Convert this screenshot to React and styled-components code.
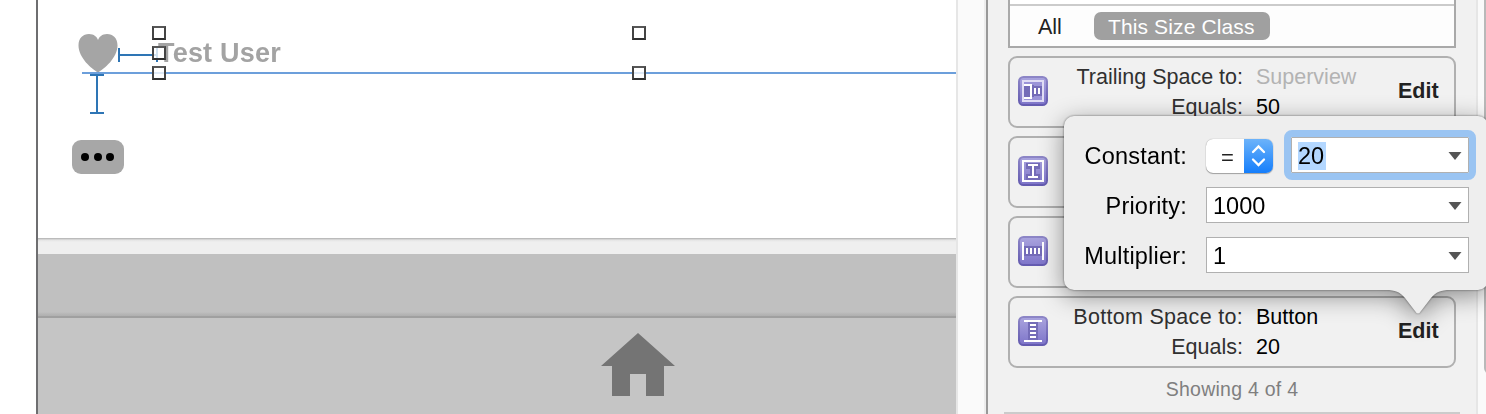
import React from "react";
import styled, { createGlobalStyle } from "styled-components";

const Global = createGlobalStyle`
  * { box-sizing: border-box; }
  body { margin: 0; overflow: hidden; background: #fff; font-family: "Liberation Sans", Arial, sans-serif; }
`;

const Window = styled.div`
  position: relative;
  display: flex;
  width: 1486px;
  height: 414px;
  overflow: hidden;
  background: #fff;
`;

/* Canvas */
const Canvas = styled.main`
  position: relative;
  display: flex;
  flex-direction: column;
  width: 920px;
  height: 414px;
  margin-left: 36px;
  border-left: 2px solid #6e6e70;
`;
const Scene = styled.div`
  height: 238px;
  background: #fff;
`;
const Gap = styled.div`
  height: 16px;
  background: linear-gradient(#b0b0b0 0, #c6c6c6 1px, #e4e4e4 2px, #efefef 4px);
`;
const ToolbarBlank = styled.div`
  height: 62px;
  background: linear-gradient(#c0c0c0 0, #c0c0c0 58px, #b6b6b6 60px, #b0b0b0 62px);
`;
const TabBar = styled.div`
  flex: 1;
  display: flex;
  justify-content: flex-start;
  padding: 15px 0 0 563px;
  background: #c5c5c5;
  border-top: 2px solid #a0a0a0;
`;
const HomeIcon = styled.svg`
  width: 74px;
  height: 66px;
  filter: blur(0.4px);
`;
const Placed = styled.div`
  position: absolute;
  left: ${(p) => p.$x - 38}px;
  top: ${(p) => p.$y}px;
  line-height: 0;
`;
const Handle = styled(Placed)`
  width: 14px;
  height: 14px;
  border: 2px solid;
  border-color: #575757 #444 #303030 #444;
  background: rgba(255, 255, 255, 0.78);
`;
const Guide = styled(Placed)`
  width: 874px;
  height: 2px;
  background: #6c9fdb;
`;
const UserLabel = styled(Placed)`
  color: #a3a3a3;
  font-size: 27px;
  font-weight: 700;
  line-height: 30px;
  letter-spacing: 0.2px;
  white-space: nowrap;
  filter: blur(0.45px);
`;
const MoreButton = styled(Placed)`
  display: flex;
  align-items: center;
  justify-content: center;
  gap: 4.7px;
  width: 52px;
  height: 34px;
  padding: 0 1px 1px 0;
  border-radius: 9px;
  background: #a7a7a7;
`;
const Dot = styled.span`
  width: 8px;
  height: 8px;
  border-radius: 50%;
  background: #000;
  filter: blur(0.4px);
`;

/* Gutter */
const Gutter = styled.div`
  width: 32px;
  border-left: 2px solid #e6e6e6;
  border-right: 2px solid #999;
  background: linear-gradient(90deg, #fafafa 26px, #ededed 26px);
`;

/* Inspector */
const Inspector = styled.aside`
  display: flex;
  flex-direction: column;
  width: 488px;
  padding: 0 20px;
  background: #f1f1f1;
`;
const SizePanel = styled.div`
  height: 48px;
  flex: none;
  padding-top: 4px;
  border: 2px solid #a9a9a9;
  border-top: 0;
  background: #fff;
`;
const Scope = styled.div`
  display: flex;
  height: 42px;
  padding: 6px 0 0 28px;
  border-top: 2px solid #cbcbcb;
  background: #fdfdfd;
  color: #222;
  font-size: 21.5px;
  line-height: 30px;
`;
const ScopeAll = styled.span`
  width: 56px;
`;
const ScopeCurrent = styled.span`
  width: 176px;
  height: 28px;
  padding-left: 14px;
  border-radius: 7px;
  background: #a0a0a0;
  color: #fff;
  font-size: 21px;
  letter-spacing: 0.12px;
  white-space: nowrap;
`;
const Constraints = styled.div`
  display: flex;
  flex-direction: column;
  gap: 8px;
  padding-top: 8px;
`;
const Card = styled.div`
  display: flex;
  height: 72px;
  border: 2px solid #b0b0b0;
  border-radius: 9px;
  background: #f1f1f1;
`;
const KindIcon = styled.svg`
  flex: none;
  width: 30px;
  height: 30px;
  margin: 18px 0 0 8px;
`;
const Facts = styled.div`
  display: grid;
  grid-template-columns: 195px 1fr;
  grid-template-rows: 30px 30px;
  column-gap: 13px;
  width: 342px;
  padding-top: 4px;
  font-size: 21.5px;
  line-height: 30px;
  white-space: nowrap;
`;
const FactName = styled.span`
  color: #303030;
  letter-spacing: ${(p) => p.$track || 0}px;
  text-align: right;
`;
const FactValue = styled.span`
  color: ${(p) => (p.$dim ? "#b3b3b3" : "#000")};
`;
const Edit = styled.span`
  margin: 19px 0 0 8px;
  color: #222;
  font-size: 21.5px;
  font-weight: 700;
  line-height: 28px;
`;
const Summary = styled.div`
  padding-top: 7px;
  color: #7f7f7f;
  font-size: 19.5px;
  line-height: 28px;
  letter-spacing: 0.25px;
  text-align: center;
`;
const Rule = styled.div`
  height: 4px;
  margin: 9px -4px 0;
  background: #cbcbcb;
`;
const ScrollTrack = styled.div`
  width: 10px;
  padding-left: 6px;
  border-left: 2px solid #e6e6e6;
  background: #fafafa;
`;
const Thumb = styled.div`
  width: 8px;
  height: 374px;
  border-radius: 0 0 0 6px;
  background: #b9b9b9;
`;

/* Popover */
const Popover = styled.div`
  position: absolute;
  left: 1064px;
  top: 116px;
  width: 424px;
  height: 174px;
  filter: drop-shadow(0 0 1px rgba(0, 0, 0, 0.5)) drop-shadow(0 6px 12px rgba(0, 0, 0, 0.42));
`;
const PopoverBody = styled.div`
  display: grid;
  grid-template-columns: 123px 263px;
  grid-template-rows: 50px 50px 50px;
  column-gap: 19px;
  width: 424px;
  height: 174px;
  padding-top: 14px;
  border-radius: 10px;
  background: #eee;
`;
const Pointer = styled.svg`
  position: absolute;
  left: 322px;
  top: 173px;
  width: 64px;
  height: 27px;
`;
const FieldName = styled.label`
  align-self: center;
  padding-top: 1px;
  color: #000;
  font-size: 23.5px;
  line-height: 26px;
  letter-spacing: 0.2px;
  text-align: right;
  white-space: nowrap;
`;
const Control = styled.div`
  display: flex;
  align-items: center;
`;
const Combo = styled.div`
  display: flex;
  flex: none;
  align-items: center;
  justify-content: space-between;
  width: ${(p) => (p.$focused ? 178 : 263)}px;
  height: 36px;
  padding: 1px 6px 0;
  border: 1px solid #b0b0b0;
  background: #fff;
  color: #000;
  font-size: 23.5px;
  line-height: 28px;
  outline: ${(p) => (p.$focused ? "7px solid #9ac4f2" : "none")};
  border-radius: ${(p) => (p.$focused ? "1px" : "0")};
`;
const Selected = styled.span`
  width: 28px;
  height: 28px;
  background: #b3d7ff;
`;
const Relation = styled.div`
  display: flex;
  width: 67px;
  height: 34px;
  margin: 2px 18px 0 0;
  overflow: hidden;
  border-radius: 7px;
  background: #fff;
  box-shadow: 0 1px 1px rgba(0, 0, 0, 0.3), 0 0 1px rgba(0, 0, 0, 0.4);
`;
const Equal = styled.span`
  width: 38px;
  padding-left: 15px;
  color: #222;
  font-size: 22px;
  line-height: 37px;
`;
const Stepper = styled.svg`
  width: 29px;
  height: 34px;
  background: linear-gradient(#6cb3fa, #157efb);
`;

const glyphs = {
  trailing: (
    <>
      <rect x="5" y="5" width="20" height="20" fill="#9b94d8" />
      <path d="M6 9h10v12H6zM16 10h8v10h-8z" fill="#746cb8" />
      <rect x="5" y="5" width="20" height="20" fill="none" stroke="#e0ddf5" strokeWidth="2" />
      <path d="M6 9h7v13H6M17 12v6M21 12v6" fill="none" stroke="#fff" strokeWidth="2" />
    </>
  ),
  height: (
    <>
      <rect x="5" y="5" width="20" height="20" fill="none" stroke="#fff" strokeWidth="2" />
      <path d="M8 7h14v6h-4v5h4v6H8v-6h4v-5H8z" fill="#746cb8" />
      <path d="M10 9h10M10 21h10M15 9v12" fill="none" stroke="#fff" strokeWidth="2" />
    </>
  ),
  leading: (
    <>
      <rect x="6" y="10" width="18" height="10" fill="#746cb8" />
      <path d="M5 6v18M25 6v18M9 12v6M13 12v6M17 12v6M21 12v6" fill="none" stroke="#fff" strokeWidth="2" />
    </>
  ),
  bottom: (
    <>
      <rect x="10" y="6" width="10" height="18" fill="#746cb8" />
      <path d="M6 5h18M6 25h18M12 9h6M12 13h6M12 17h6M12 21h6" fill="none" stroke="#fff" strokeWidth="2" />
    </>
  ),
};

function Kind({ name }) {
  return (
    <KindIcon viewBox="0 0 30 30">
      <defs>
        <linearGradient id={`fill-${name}`} x1="0" y1="0" x2="0" y2="1">
          <stop offset="0" stopColor="#aaa4de" />
          <stop offset="1" stopColor="#7d74c9" />
        </linearGradient>
        <linearGradient id={`edge-${name}`} x1="0" y1="0" x2="0" y2="1">
          <stop offset="0" stopColor="#8c85c6" />
          <stop offset="1" stopColor="#645bb0" />
        </linearGradient>
      </defs>
      <rect x="1" y="1" width="28" height="28" rx="4.5" fill={`url(#fill-${name})`} stroke={`url(#edge-${name})`} strokeWidth="2" />
      {glyphs[name]}
    </KindIcon>
  );
}

function Constraint({ kind, name, track, target, dim, value }) {
  return (
    <Card>
      <Kind name={kind} />
      {name && (
        <>
          <Facts>
            <FactName $track={track}>{name}</FactName>
            <FactValue $dim={dim}>{target}</FactValue>
            <FactName>Equals:</FactName>
            <FactValue>{value}</FactValue>
          </Facts>
          <Edit>Edit</Edit>
        </>
      )}
    </Card>
  );
}

const Arrow = () => (
  <svg width="14" height="8" viewBox="0 0 14 8">
    <path d="M0.5 0h13L7 8z" fill="#555" />
  </svg>
);

const handles = [[152, 26], [152, 46], [152, 66], [632, 26], [632, 66]];

export default function App() {
  return (
    <Window>
      <Global />
      <Canvas>
        <Scene />
        <Gap />
        <ToolbarBlank />
        <TabBar>
          <HomeIcon viewBox="0 0 74 66">
            <path d="M37 0L74 33H63v30H45V41H29v22H11V33H0z" fill="#747474" />
          </HomeIcon>
        </TabBar>
        <Placed $x={78} $y={33}>
          <svg width="40" height="40" viewBox="0 0 40 40">
            <path d="M20 39.5C14 36 .5 25 .5 12.500C.5 5 5 1 11 1c5 0 8 3 9 6 1-3 4-6 9-6 6 0 10.500 4 10.500 11.500C39.500 25 26 36 20 39.500z" fill="#a5a5a5" />
          </svg>
        </Placed>
        <UserLabel $x={158} $y={38}>Test User</UserLabel>
        <Guide $x={82} $y={72} />
        <Placed $x={90} $y={48}>
          <svg width="70" height="67" viewBox="0 0 70 67">
            <path d="M29 0v14M29 7h37M67 0v14M0 27h14M7 27v38M0 65h14" fill="none" stroke="#2e75b5" strokeWidth="2" />
          </svg>
        </Placed>
        <MoreButton $x={72} $y={140}><Dot /><Dot /><Dot /></MoreButton>
        {handles.map(([x, y]) => <Handle key={`${x}-${y}`} $x={x} $y={y} />)}
      </Canvas>
      <Gutter />
      <Inspector>
        <SizePanel>
          <Scope>
            <ScopeAll>All</ScopeAll>
            <ScopeCurrent>This Size Class</ScopeCurrent>
          </Scope>
        </SizePanel>
        <Constraints>
          <Constraint kind="trailing" name="Trailing Space to:" target="Superview" dim value="50" />
          <Constraint kind="height" />
          <Constraint kind="leading" />
          <Constraint kind="bottom" name="Bottom Space to:" track={0.3} target="Button" value="20" />
        </Constraints>
        <Summary>Showing 4 of 4</Summary>
        <Rule />
      </Inspector>
      <ScrollTrack><Thumb /></ScrollTrack>
      <Popover>
        <PopoverBody>
          <FieldName>Constant:</FieldName>
          <Control>
            <Relation>
              <Equal>=</Equal>
              <Stepper viewBox="0 0 29 34">
                <path d="M9 13l5.500-5.500L20 13M9 20.500l5.500 5.500L20 20.500" fill="none" stroke="#fff" strokeWidth="2.300" strokeLinecap="round" />
              </Stepper>
            </Relation>
            <Combo $focused><Selected>20</Selected><Arrow /></Combo>
          </Control>
          <FieldName>Priority:</FieldName>
          <Control><Combo><span>1000</span><Arrow /></Combo></Control>
          <FieldName>Multiplier:</FieldName>
          <Control><Combo><span>1</span><Arrow /></Combo></Control>
        </PopoverBody>
        <Pointer viewBox="0 0 64 27">
          <path d="M0 0V1C9 1 14 3 19 9L29 22Q32 27 35 22L45 9C50 3 55 1 64 1V0z" fill="#eee" />
        </Pointer>
      </Popover>
    </Window>
  );
}
